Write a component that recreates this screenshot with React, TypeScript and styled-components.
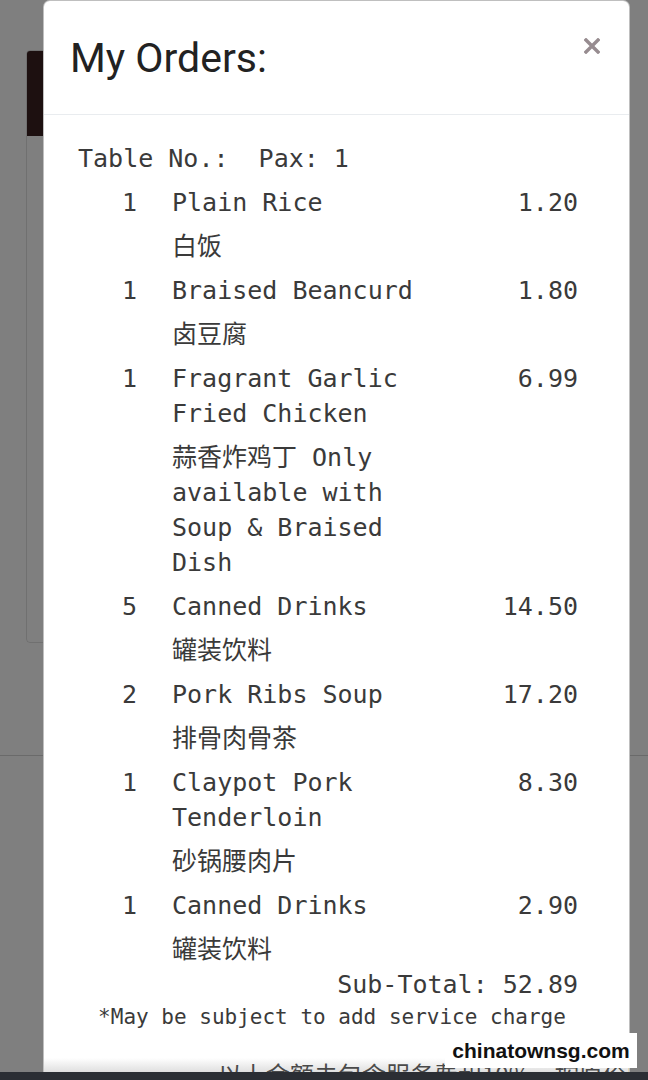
import * as React from "react";
import styled, { createGlobalStyle } from "styled-components";

const GlobalStyle = createGlobalStyle`
  html, body {
    margin: 0;
    padding: 0;
    background: #ffffff;
    font-family: "Roboto", "Liberation Sans", sans-serif;
  }
  * {
    box-sizing: border-box;
  }
`;

type Item = {
  qty: number;
  name: string;
  desc: string;
  price: string;
};

const orders: Item[] = [
  { qty: 1, name: "Plain Rice", desc: "白饭", price: "1.20" },
  { qty: 1, name: "Braised Beancurd", desc: "卤豆腐", price: "1.80" },
  {
    qty: 1,
    name: "Fragrant Garlic Fried Chicken",
    desc: "蒜香炸鸡丁 Only available with Soup & Braised Dish",
    price: "6.99",
  },
  { qty: 5, name: "Canned Drinks", desc: "罐装饮料", price: "14.50" },
  { qty: 2, name: "Pork Ribs Soup", desc: "排骨肉骨茶", price: "17.20" },
  { qty: 1, name: "Claypot Pork Tenderloin", desc: "砂锅腰肉片", price: "8.30" },
  { qty: 1, name: "Canned Drinks", desc: "罐装饮料", price: "2.90" },
];

const Screen = styled.div`
  width: 648px;
  height: 1080px;
  display: flex;
  flex-direction: column;
  overflow: hidden;
  position: relative;
`;

const Stage = styled.div`
  flex: 1;
  position: relative;
  overflow: hidden;
`;

const Page = styled.div`
  padding: 50px 26px 0;
`;

const Card = styled.div`
  height: 593px;
  border: 1px solid rgba(0, 0, 0, 0.12);
  border-radius: 4px;
  overflow: hidden;
`;

const CardHead = styled.div`
  height: 85px;
  background: #3a2020;
`;

const Rule = styled.div`
  margin: 112px -26px 0;
  border-top: 1px solid #d4d4d4;
`;

const Overlay = styled.div`
  position: absolute;
  inset: 0;
  background: rgba(0, 0, 0, 0.5);
`;

const Modal = styled.div`
  margin: 0 18px 0 43px;
  background: #ffffff;
  border: 1px solid rgba(0, 0, 0, 0.25);
  border-radius: 7px;
  color: #2a2a2a;
`;

const Header = styled.div`
  display: flex;
  justify-content: space-between;
  align-items: flex-start;
  padding: 33px 26px 32px 26px;
  border-bottom: 1px solid #e9ecef;
`;

const Title = styled.h5`
  margin: 0;
  font-family: "Roboto", sans-serif;
  font-weight: 400;
  font-size: 41px;
  line-height: 48px;
  color: #222;
`;

const Close = styled.button`
  display: flex;
  border: 0;
  padding: 0;
  margin: 4px 3px 0 0;
  background: transparent;
  color: #978c90;
  cursor: pointer;
`;

const Body = styled.div`
  padding: 26px 51px 26px 34px;
  font-family: "DejaVu Sans Mono", "Noto Sans CJK SC", monospace;
  font-size: 25px;
  line-height: 35px;
  color: #3a3a3a;
`;

const InfoLine = styled.div`
  white-space: pre;
  margin-bottom: 9px;
`;

const Items = styled.div`
  display: flex;
  flex-direction: column;
  gap: 9px;
`;

const Row = styled.div`
  display: grid;
  grid-template-columns: 59px 260px 1fr;
  column-gap: 35px;
`;

const Qty = styled.div`
  text-align: right;
`;

const NameCell = styled.div`
  display: flex;
  flex-direction: column;
  gap: 9px;
`;

const Price = styled.div`
  text-align: right;
`;

const SubTotal = styled.div`
  text-align: right;
`;

const Note = styled.div`
  font-size: 21px;
  line-height: 30px;
  text-align: center;
  padding-left: 8px;
  white-space: nowrap;
`;

const Footer = styled.div`
  height: 40px;
  padding: 1px 0 0 174px;
  background: linear-gradient(#ffffff 0%, #d6d6d6 45%);
  font-family: "Noto Sans CJK SC", sans-serif;
  font-size: 24px;
  line-height: 30px;
  color: #4a4a4a;
  white-space: nowrap;
  overflow: hidden;
`;

const BottomBar = styled.div`
  height: 8px;
  background: #2b2e34;
`;

const Watermark = styled.div`
  position: absolute;
  left: 445px;
  top: 1033px;
  width: 192px;
  height: 35px;
  background: #ffffff;
  display: flex;
  align-items: center;
  justify-content: center;
  font-family: "Liberation Sans", Arial, sans-serif;
  font-weight: 700;
  font-size: 21px;
  color: #111111;
`;

const CloseIcon = () => (
  <svg width="16" height="16" viewBox="0 0 16 16" fill="none">
    <path
      d="M2 2 L14 14 M14 2 L2 14"
      stroke="currentColor"
      strokeWidth="3.4"
      strokeLinecap="square"
    />
  </svg>
);

export default function App() {
  return (
    <Screen>
      <GlobalStyle />
      <Stage>
        <Page>
          <Card>
            <CardHead />
          </Card>
          <Rule />
        </Page>
        <Overlay>
          <Modal>
            <Header>
              <Title>My Orders:</Title>
              <Close aria-label="Close">
                <CloseIcon />
              </Close>
            </Header>
            <Body>
              <InfoLine>{"Table No.:  Pax: 1"}</InfoLine>
              <Items>
                {orders.map((item, index) => (
                  <Row key={index}>
                    <Qty>{item.qty}</Qty>
                    <NameCell>
                      <div>{item.name}</div>
                      <div>{item.desc}</div>
                    </NameCell>
                    <Price>{item.price}</Price>
                  </Row>
                ))}
              </Items>
              <SubTotal>Sub-Total: 52.89</SubTotal>
              <Note>*May be subject to add service charge</Note>
            </Body>
            <Footer>以上金额未包含服务费和10%，按原价收费</Footer>
          </Modal>
        </Overlay>
      </Stage>
      <BottomBar />
      <Watermark>chinatownsg.com</Watermark>
    </Screen>
  );
}
